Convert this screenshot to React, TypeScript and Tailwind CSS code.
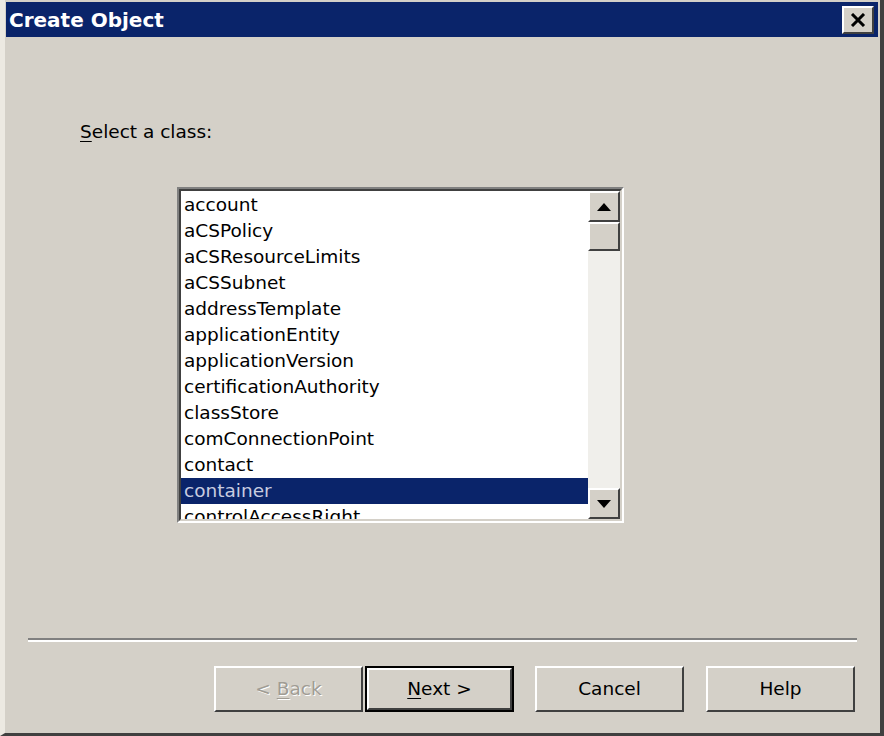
import React from 'react'

const classes = [
  'account',
  'aCSPolicy',
  'aCSResourceLimits',
  'aCSSubnet',
  'addressTemplate',
  'applicationEntity',
  'applicationVersion',
  'certificationAuthority',
  'classStore',
  'comConnectionPoint',
  'contact',
  'container',
  'controlAccessRight',
]

const font = "font-['Tahoma','DejaVu_Sans',sans-serif]"

function ScrollButton({ dir }: { dir: 'up' | 'down' }) {
  return (
    <div className="w-[32px] h-[31px] bg-[#d4d0c8] border-t-2 border-l-2 border-t-white border-l-white border-r-2 border-b-2 border-r-[#404040] border-b-[#404040] flex items-center justify-center">
      <svg width="14" height="8" viewBox="0 0 14 8">
        {dir === 'up' ? <polygon points="7,0 14,8 0,8" fill="#000" /> : <polygon points="0,0 14,0 7,8" fill="#000" />}
      </svg>
    </div>
  )
}

function Button({ children, primary, disabled }: { children: React.ReactNode; primary?: boolean; disabled?: boolean }) {
  return (
    <div className={`w-[149px] h-[46px] ${primary ? 'border-2 border-black' : ''}`}>
      <div className="w-full h-full bg-[#d4d0c8] border-t-2 border-l-2 border-t-white border-l-white border-r-2 border-b-2 border-r-[#404040] border-b-[#404040] flex items-center justify-center">
        <span className={`text-[18.5px] ${disabled ? 'text-[#a09c94] [text-shadow:1px_1px_0_#fff]' : 'text-black'}`}>{children}</span>
      </div>
    </div>
  )
}

export default function App() {
  return (
    <div className={`w-[884px] h-[736px] bg-[#d4d0c8] ${font} border-l-[5px] border-l-[#ece9e2] border-r-[4px] border-r-[#404040] border-b-[3px] border-b-[#404040] pt-[2px] pl-[1px] pr-[2px] overflow-hidden`}>
      {/* title bar */}
      <div className="h-[35px] bg-[#0a246a] flex items-center justify-between pl-[3px] pr-[4px]">
        <span className="text-white font-bold text-[20px]">Create Object</span>
        <div className="w-[32px] h-[28px] bg-[#d4d0c8] border-t-2 border-l-2 border-t-white border-l-white border-r-2 border-b-2 border-r-[#404040] border-b-[#404040] flex items-center justify-center">
          <svg width="16" height="14" viewBox="0 0 16 14">
            <path d="M2 1 L14 13 M14 1 L2 13" stroke="#000" strokeWidth="3" />
          </svg>
        </div>
      </div>

      {/* label */}
      <div className="mt-[83px] ml-[74px] text-[18.5px] leading-[24px] text-black">
        <u className="underline-offset-[3px]">S</u>elect a class:
      </div>

      {/* list box */}
      <div className="mt-[43px] ml-[171px] w-[447px] h-[336px] border-t-2 border-l-2 border-t-[#808080] border-l-[#808080] border-r-2 border-b-2 border-r-white border-b-white">
        <div className="w-full h-full border-t-2 border-l-2 border-t-[#404040] border-l-[#404040] border-r-2 border-b-2 border-r-[#d4d0c8] border-b-[#d4d0c8] bg-white flex overflow-hidden">
          <div className="flex-1 overflow-hidden pt-[1px]">
            {classes.map((c) => (
              <div
                key={c}
                className={`h-[26px] leading-[26px] pl-[3px] text-[18.5px] whitespace-nowrap ${c === 'container' ? 'bg-[#0a246a] text-[#c8cce0]' : 'text-black'}`}
              >
                {c}
              </div>
            ))}
          </div>
          <div className="w-[32px] h-full bg-[#f0efeb] flex flex-col">
            <ScrollButton dir="up" />
            <div className="w-[32px] h-[29px] bg-[#d4d0c8] border-t-2 border-l-2 border-t-white border-l-white border-r-2 border-b-2 border-r-[#404040] border-b-[#404040]" />
            <div className="flex-1" />
            <ScrollButton dir="down" />
          </div>
        </div>
      </div>

      {/* separator */}
      <div className="mt-[115px] ml-[22px] w-[829px] border-t-2 border-t-[#808080] border-b-2 border-b-white" />

      {/* buttons */}
      <div className="mt-[24px] ml-[208px] flex">
        <Button disabled>
          &lt; <u className="underline-offset-[3px]">B</u>ack
        </Button>
        <div className="ml-[2px]">
          <Button primary>
            <u className="underline-offset-[3px]">N</u>ext &gt;
          </Button>
        </div>
        <div className="ml-[21px]">
          <Button>Cancel</Button>
        </div>
        <div className="ml-[22px]">
          <Button>Help</Button>
        </div>
      </div>
    </div>
  )
}
